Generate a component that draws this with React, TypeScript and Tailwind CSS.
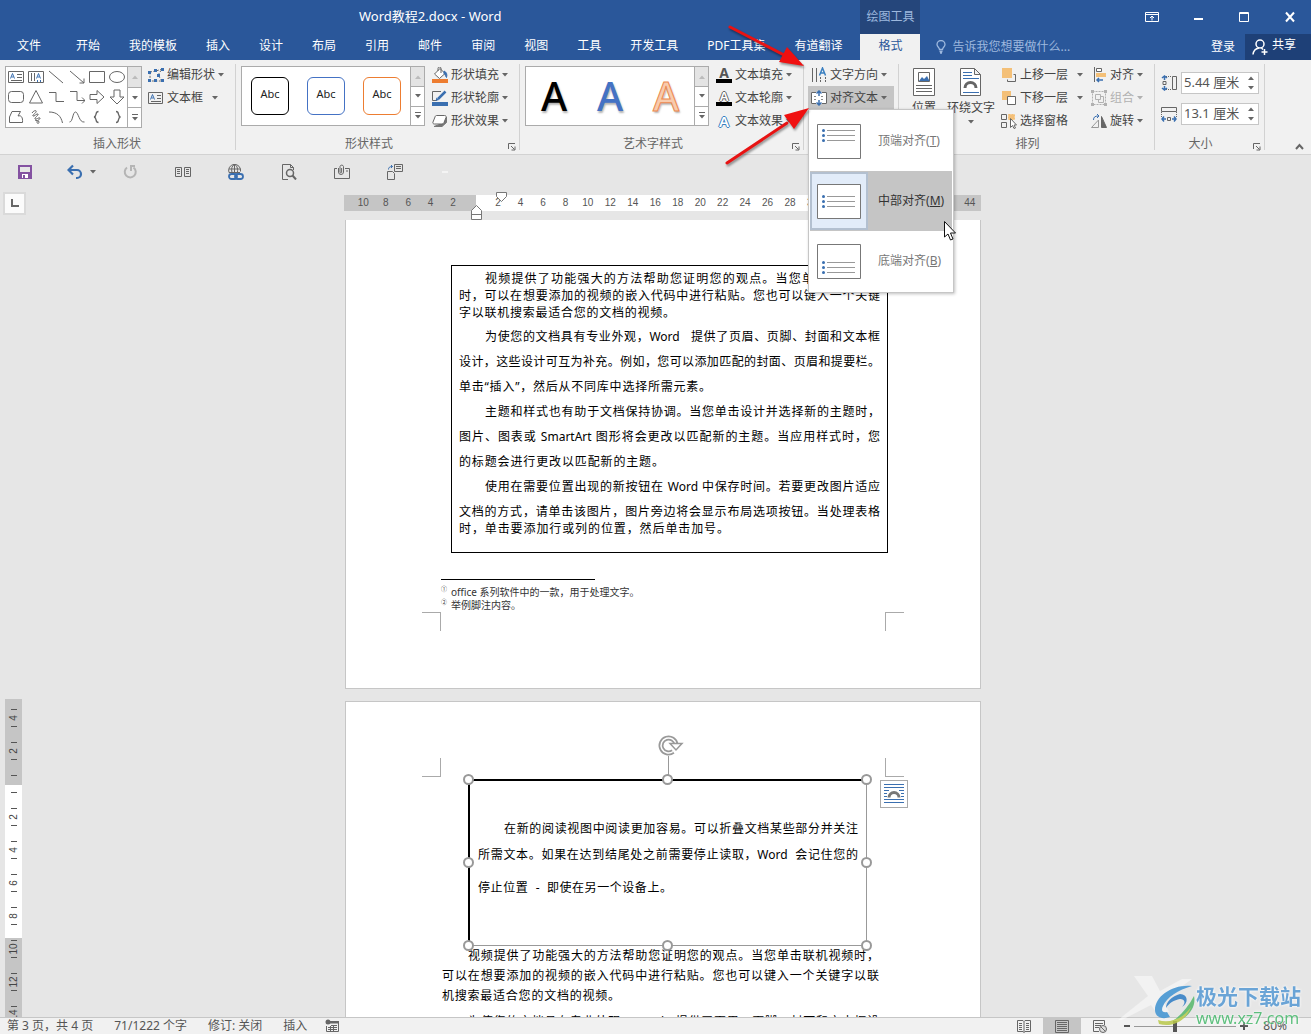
import type { ReactNode } from 'react';

type IconProps = { children: ReactNode; w?: number; h?: number; className?: string };

function Icon({ children, w = 16, h = 16, className = '' }: IconProps) {
  return (
    <svg
      width={w}
      height={h}
      viewBox={`0 0 ${w} ${h}`}
      fill="none"
      stroke="#666"
      aria-hidden="true"
      className={`shrink-0 ${className}`}
    >
      {children}
    </svg>
  );
}

function Caret({ className = 'fill-[#666]' }: { className?: string }) {
  return (
    <svg width="6" height="4" viewBox="0 0 6 4" aria-hidden="true" className={`shrink-0 ${className}`}>
      <path d="M0 0h6L3 3.5z" />
    </svg>
  );
}

const TABS = [
  '开始', '我的模板', '插入', '设计', '布局', '引用', '邮件',
  '审阅', '视图', '工具', '开发工具', 'PDF工具集', '有道翻译',
];

function Header() {
  return (
    <header className="flex h-[60px] shrink-0 bg-[#2a579a] text-white">
      <div className="flex shrink-0 flex-col">
        <h1 className="flex h-[34px] items-center justify-center text-[13px]">Word教程2.docx - Word</h1>
        <nav className="flex h-[23px] items-center gap-[29px] pr-[18px] pl-[17px]">
          <button className="mr-1.5">文件</button>
          {TABS.map((t) => (
            <button key={t}>{t}</button>
          ))}
        </nav>
      </div>
      <div className="flex w-[60px] shrink-0 flex-col">
        <div className="flex h-[34px] items-center justify-center bg-[#25467b] text-[#9db8de]">绘图工具</div>
        <button className="h-[26px] bg-[#f1f1f1] pb-[3px] text-[#2a579a]">格式</button>
      </div>
      <div className="flex min-w-0 flex-1 flex-col">
        <div className="flex h-[34px] items-center justify-end gap-8 pr-3.5">
          <button aria-label="功能区显示选项">
            <Icon w={14} h={12}>
              <path stroke="#fff" d="M.5 1.5h13v9H.5zM.5 3.5h13M7 9.5v-4M5 7l2-2 2 2" />
            </Icon>
          </button>
          <button aria-label="最小化">
            <Icon w={14} h={12}><path stroke="#fff" strokeWidth="2" d="M3 8h9" /></Icon>
          </button>
          <button aria-label="最大化">
            <Icon w={14} h={12}><path stroke="#fff" d="M2.5 1.5h9v9h-9zM2.5 2.5h9" /></Icon>
          </button>
          <button aria-label="关闭">
            <Icon w={14} h={12}><path stroke="#fff" strokeWidth="2" d="M3 1.500l8 9M11 1.500l-8 9" /></Icon>
          </button>
        </div>
        <div className="flex h-[26px] items-center pl-4">
          <button className="flex items-center gap-1.5 text-[#9db8de]">
            <Icon w={10} h={14}>
              <path stroke="#9db8de" strokeWidth="1.300" d="M3.500 9.500C3.500 7.500 1 7 1 4.500a4 4 0 0 1 8 0C9 7 6.500 7.500 6.500 9.500zM3.500 11.500h3M4 13h2" />
            </Icon>
            告诉我您想要做什么...
          </button>
          <button className="ml-auto pr-2.5">登录</button>
          <button className="flex h-[26px] w-[66px] items-center gap-1 bg-[#1e4077] pb-1 pl-[7px]">
            <Icon className="mt-1">
              <circle cx="8" cy="5" r="4" stroke="#fff" strokeWidth="1.500" />
              <path stroke="#fff" strokeWidth="1.500" d="M1 15.500c.5-4 3-6 6-6.500M9.500 9l1.500 1.500M12.500 10v6M9.500 13h6" />
            </Icon>
            共享
          </button>
        </div>
      </div>
    </header>
  );
}

type GroupProps = { className: string; label?: string; labelClass?: string; launcher?: boolean; children: ReactNode };

function Group({ className, label, labelClass = '', launcher = false, children }: GroupProps) {
  return (
    <section className={`my-1 flex shrink-0 flex-col border-r border-[#d2d2d2] ${className}`}>
      <div className="flex h-[71px] shrink-0 items-start">{children}</div>
      <div className={`flex h-[18px] shrink-0 items-center justify-center text-[#666] ${labelClass}`}>
        <span>{label}</span>
      </div>
      {launcher && (
        <button aria-label={`${label}选项`} className="-mt-2.5 mr-[3px] self-end">
          <Icon w={8} h={8}><path d="M.5 6V.5H7M3 3l3.500 3.500M7 3.500V7H3.500" /></Icon>
        </button>
      )}
    </section>
  );
}

function GalleryScroll() {
  return (
    <div className="grid w-[14px] shrink-0 grid-rows-3 border-l border-[#ababab] bg-white">
      <button aria-label="上一行" className="flex items-center justify-center bg-[#e4e4e4]">
        <Caret className="rotate-180 fill-[#bbb]" />
      </button>
      <button aria-label="下一行" className="flex items-center justify-center border-t border-[#ababab]"><Caret /></button>
      <button aria-label="其他" className="flex flex-col items-center justify-center gap-0.5 border-t border-[#ababab]">
        <span className="h-px w-1.5 bg-[#666]" />
        <Caret />
      </button>
    </div>
  );
}

type RowButtonProps = { icon: ReactNode; label: string; caret?: boolean; className?: string; caretClass?: string };

function RowButton({ icon, label, caret = true, className = '', caretClass = 'fill-[#666]' }: RowButtonProps) {
  return (
    <button className={`flex h-[23px] items-center gap-[3px] whitespace-nowrap ${className}`}>
      {icon}
      {label}
      {caret && <Caret className={caretClass} />}
    </button>
  );
}

const SHAPES: ReactNode[] = [
  <><path d="M.5 2.500h15v11H.5zM9 5.500h5M9 8.500h5M3 11.500h11" /><path stroke="#3a6fb0" d="M2.500 9.500l2-5 2 5M3.500 8h2" /></>,
  <><path d="M.5 2.500h15v11H.5zM3.500 4v8M6.500 4v8" /><path stroke="#3a6fb0" d="M8.500 9.500l2-5 2 5M9.500 8h2M9.500 11v2M12.500 11v2" /></>,
  <path d="M1 2l14 12" />,
  <path d="M1 2l14 12M15 9.500V14h-4.500" />,
  <path d="M.5 2.500h15v11H.5z" />,
  <ellipse cx="8" cy="8" rx="7.500" ry="5.500" />,
  <rect x=".5" y="2.500" width="15" height="11" rx="3" />,
  <path d="M8 1.500l6.500 12.500h-13z" />,
  <path d="M1 3.500h7v9h8" />,
  <path d="M1 2.500h7v9h8M13 8.500l3 3-3 3" />,
  <path d="M1 5.500h7v-4l7 6.500-7 6.500v-4H1z" />,
  <path d="M5 1v7H1l7 7 7-7h-4V1z" />,
  <path d="M4 2.500h8.500L10 7c3-1 5 1 4.500 6.500H1.500V8z" />,
  <path d="M4 4c2-3 5-3 4-1S4 6 5 7s4-3 5-2-4 4-3 5 4-2 5-1-3 2-3 4 2 2 2 0-3-1-4-2" />,
  <path d="M1 3c8 0 12 4 13.500 11" />,
  <path d="M.5 13C4 13 3.500 3 6.500 3S10 14 15.500 13" />,
  <path strokeWidth="1.300" d="M9.500 2.500C5.500 2.500 8.500 7.500 5 8c3.500.5.5 5.500 4.500 5.500" />,
  <path strokeWidth="1.300" d="M7 2.500c4 0 1 5 4.500 5.500C8 8.500 11 13.500 7 13.500" />,
];

function ShapeGallery() {
  return (
    <div className="mt-0.5 flex h-[62px] w-[137px] shrink-0 border border-[#ababab] bg-white">
      <div className="grid flex-1 grid-cols-6 place-items-center">
        {SHAPES.map((s, i) => (
          <button key={i} aria-label={`形状 ${i + 1}`}><Icon>{s}</Icon></button>
        ))}
      </div>
      <GalleryScroll />
    </div>
  );
}

const STYLE_SWATCHES = ['border-black', 'border-[#4472c4]', 'border-[#ed7d31]'];

const ART_STYLES = [
  'text-black',
  'text-[#4472c4]',
  'text-[#f8cbad] [-webkit-text-stroke:1px_#ed8a50]',
];

const fillIcon = (
  <Icon>
    <path fill="#fff" d="M2.500 7L8 1.500 13 6.500 7.500 11.500z" />
    <path d="M6 4V1.500a1.500 1.500 0 0 1 3 0V6" />
    <path stroke="#3a6fb0" fill="#3a6fb0" d="M12 4c2.500 1 3.500 3.500 2.500 6.500-1-1-1-3-2.500-4z" />
    <path stroke="none" fill="#ed7d31" d="M0 12h16v4H0z" />
  </Icon>
);
const outlineIcon = (
  <Icon>
    <path d="M9 1.500H.5v9H5" />
    <path stroke="#3a6fb0" strokeWidth="2.500" d="M6 9l7.500-7.500" />
    <path stroke="none" fill="#3a6fb0" d="M3.500 11l1-3.500 2.500 2.500zM0 12h16v4H0z" />
  </Icon>
);
const effectIcon = (
  <Icon>
    <path fill="#777" stroke="#777" d="M2 13.500h8l4.500-4V4l-3 6z" />
    <path fill="#fff" d="M4.500 2.500h8c1.500 0 2 1 1.500 2l-2 5c-.5 1-1 1.500-2 1.500H2.500C1 11 .5 10 1 9l2-5c.3-1 .8-1.500 1.500-1.500z" />
  </Icon>
);

type LetterIconProps = { bar?: boolean; letter: string };

function LetterIcon({ bar = false, letter }: LetterIconProps) {
  return (
    <span aria-hidden="true" className="flex h-4 w-4 shrink-0 flex-col items-center justify-end">
      <span className={`leading-3 ${letter}`}>A</span>
      {bar && <span className="h-1 w-full bg-black" />}
    </span>
  );
}

const textBoxIcon = (
  <Icon>
    <path d="M.5 2.500h14v11H.5zM9 5.500h4M9 8.500h4M3 11.500h10" />
    <path stroke="#3a6fb0" d="M2.500 9.500l2-5 2 5M3.500 8h2" />
  </Icon>
);
const editShapeIcon = (
  <Icon>
    <path strokeDasharray="2 1.500" d="M2 5l6-1 6-2-4 6 4 6H2z" />
    <path stroke="none" fill="#3a6fb0" d="M0 4h3v3H0zM6 2h3v3H6zM13 1h3v3h-3zM9 7h3v3H9zM13 12h3v3h-3zM0 12h3v3H0zM6 12h3v3H6z" />
  </Icon>
);
const textDirIcon = (
  <Icon>
    <path d="M1.500 1v14M5.500 1v14M9.500 10v2M9.500 13v2M14.500 10v2M14.500 13v2" />
    <path stroke="#3a7fc0" strokeWidth="1.500" d="M8.500 8.500L11.500 1l3 7.500M9.500 6h4" />
  </Icon>
);
const alignTextIcon = (
  <Icon>
    <path stroke="none" fill="#fff" d="M0 2h16v12H0z" />
    <path d="M5 2.500H.5v11H5M11 2.500h4.500v11H11" />
    <path stroke="#888" d="M3 6.500h3M10 6.500h3M3 9.500h3M10 9.500h3" strokeDasharray="2 1" />
    <path stroke="#3a6fb0" strokeWidth="1.500" d="M8 6V1.500M5.500 3.500L8 1l2.500 2.500M8 10v4.500M5.500 12.500L8 15l2.500-2.500" />
  </Icon>
);

const ALIGN_OPTIONS = [
  { label: '顶端对齐', key: 'T', first: 6 },
  { label: '中部对齐', key: 'M', first: 12 },
  { label: '底端对齐', key: 'B', first: 18 },
];

function AlignMenu() {
  return (
    <div role="menu" className="absolute top-full left-0 z-20 w-[146px] border border-[#c6c6c6] bg-white p-px shadow-[1px_1px_3px_rgba(0,0,0,0.25)]">
      {ALIGN_OPTIONS.map((o) => {
        const active = o.key === 'M';
        return (
          <button
            key={o.key}
            role="menuitem"
            className={`flex h-[60px] w-full items-center gap-2.5 whitespace-nowrap ${active ? 'bg-[#c5c5c5] text-[#333]' : 'text-[#777]'}`}
          >
            <span className={`flex h-[58px] w-[58px] shrink-0 items-center justify-center border-2 ${active ? 'border-[#b3c0d0] bg-[#e2ecf9]' : 'border-transparent'}`}>
              <Icon w={44} h={35}>
                <path fill="#fff" stroke="#777" d="M.5.500h43v34H.5z" />
                {[0, 5, 10].map((d) => (
                  <g key={d}>
                    <path stroke="#999" d={`M10 ${o.first + d + 0.5}h28`} />
                    <circle cx="6.500" cy={o.first + d + 0.5} r="1.500" stroke="none" fill="#3a6fb0" />
                  </g>
                ))}
              </Icon>
            </span>
            <span>{o.label}(<u>{o.key}</u>)</span>
          </button>
        );
      })}
      <svg width="12" height="20" viewBox="0 0 12 20" aria-hidden="true" className="absolute top-[111px] left-[135px]">
        <path fill="#fff" stroke="#111" d="M.5.500v15.500l3.500-3 2.500 6 2.500-1-2.500-6h5z" />
      </svg>
    </div>
  );
}

function SizeField({ label, value, icon }: { label: string; value: string; icon: ReactNode }) {
  return (
    <label className="flex items-center gap-1">
      {icon}
      <span className="flex h-[22px] w-[78px] border border-[#c6c6c6] bg-white">
        <input aria-label={label} defaultValue={value} className="w-0 flex-1 pl-0.5 text-[13px] text-[#555] outline-none" />
        <span className="flex w-[14px] flex-col items-center justify-center gap-1.5">
          <Caret className="rotate-180 fill-[#666]" />
          <Caret />
        </span>
      </span>
    </label>
  );
}

function Ribbon() {
  return (
    <div className="relative z-10 flex h-[95px] shrink-0 border-b border-[#d2d2d2] bg-[#f1f1f1]">
      <Group className="w-[236px] pl-[5px]" label="插入形状" labelClass="pr-1.5">
        <ShapeGallery />
        <div className="-mt-px ml-1.5">
          <RowButton icon={editShapeIcon} label="编辑形状" />
          <RowButton icon={textBoxIcon} label="文本框" caretClass="ml-1.5 fill-[#666]" />
        </div>
      </Group>

      <Group className="w-[284px] pl-[5px]" label="形状样式" labelClass="pr-[22px]" launcher>
        <div className="mt-0.5 flex h-[60px] w-[184px] shrink-0 border border-[#ababab] bg-white">
          <div className="flex flex-1 items-center gap-[18px] pl-[9px]">
            {STYLE_SWATCHES.map((c) => (
              <button key={c} className={`flex h-[38px] w-[38px] justify-center rounded-md border pt-[9px] text-[11px] text-[#222] ${c}`}>
                Abc
              </button>
            ))}
          </div>
          <GalleryScroll />
        </div>
        <div className="-mt-px ml-[7px]">
          <RowButton icon={fillIcon} label="形状填充" />
          <RowButton icon={outlineIcon} label="形状轮廓" />
          <RowButton icon={effectIcon} label="形状效果" />
        </div>
      </Group>

      <Group className="w-[284px] pl-[5px]" label="艺术字样式" labelClass="pr-[22px]" launcher>
        <div className="mt-0.5 flex h-[60px] w-[184px] shrink-0 border border-[#ababab] bg-white">
          <div className="grid flex-1 grid-cols-3 place-items-center">
            {ART_STYLES.map((c) => (
              <button key={c} className={`text-[40px] leading-none font-medium [text-shadow:1px_2px_2px_rgba(0,0,0,0.3)] ${c}`}>
                A
              </button>
            ))}
          </div>
          <GalleryScroll />
        </div>
        <div className="-mt-px ml-[7px]">
          <RowButton icon={<LetterIcon bar letter="text-sm font-bold text-[#555]" />} label="文本填充" />
          <RowButton icon={<LetterIcon bar letter="text-[13px] font-semibold text-white [text-shadow:1px_0_#666,-1px_0_#666,0_1px_#666,0_-1px_#666]" />} label="文本轮廓" />
          <RowButton icon={<LetterIcon letter="mb-0.5 text-[15px] font-semibold text-white [text-shadow:1px_0_#3a7fc0,-1px_0_#3a7fc0,0_1px_#3a7fc0,0_-1px_#3a7fc0]" />} label="文本效果" />
        </div>
      </Group>

      <Group className="w-[95px] pl-1">
        <div className="-mt-px">
          <RowButton icon={textDirIcon} label="文字方向" className="w-[86px] px-[3px]" />
          <div className="relative">
            <RowButton icon={alignTextIcon} label="对齐文本" className="w-[86px] bg-[#c5c5c5] px-[3px]" />
            <AlignMenu />
          </div>
        </div>
      </Group>

      <Group className="w-[256px] pl-0.5" label="排列">
        <button className="flex w-[46px] flex-col items-center gap-1 pt-1">
          <Icon w={24} h={28}>
            <path fill="#fff" d="M1.500.500h21v27h-21zM4 17.500h16M4 20.500h16M4 23.500h16M6.500 4.500h11v9h-11z" />
            <path stroke="none" fill="#3a6fb0" d="M7 13l3-4 2 2 3-3 2.500 5z" />
          </Icon>
          位置
        </button>
        <button className="flex w-[48px] flex-col items-center gap-1 pt-1 whitespace-nowrap">
          <Icon w={24} h={28}>
            <path fill="#fff" d="M1.500.500h14l6 6v21h-20zM15.500.500v6h6" />
            <path stroke="#3a6fb0" d="M4 4.500h9M4 7.500h9M4 10.500h16M4 24.500h16" />
            <path stroke="#666" strokeWidth="3" d="M6 20a5.500 5.500 0 0 1 11 0" />
          </Icon>
          环绕文字
          <Caret />
        </button>
        <div className="-mt-px ml-1.5 w-[90px]">
          <RowButton
            icon={<Icon><path stroke="none" fill="#f4c078" d="M1 1h10v10H1z" /><path d="M12.500 7.500h2v7h-8v-2" /></Icon>}
            label="上移一层"
            caretClass="ml-1.5 fill-[#666]"
          />
          <RowButton
            icon={<Icon><path stroke="none" fill="#f4c078" d="M1 1h9v9H1z" /><path fill="#fff" d="M6.500 6.500h8v8h-8z" /></Icon>}
            label="下移一层"
            caretClass="ml-1.5 fill-[#666]"
          />
          <RowButton
            icon={
              <Icon>
                <path d="M.5 1.500h5v5h-5zM.5 9.500h5v5h-5z" />
                <path fill="#f4c078" stroke="#f4c078" strokeDasharray="2 1" d="M7.500 1.500h6v5h-6z" />
                <path fill="#fff" d="M9.500 5.500v9l2-2 1.500 3 1.500-.5-1.500-3h2.500z" />
              </Icon>
            }
            label="选择窗格"
            caret={false}
          />
        </div>
        <div className="-mt-px">
          <RowButton
            icon={
              <Icon>
                <path d="M3.500 0v15" />
                <path fill="#fff" d="M5.500 1.500h5v3h-5z" />
                <path stroke="none" fill="#f4c078" d="M5 6h10v4H5z" />
                <path stroke="#3a6fb0" strokeWidth="1.500" d="M12 13H6M8 11l-2 2 2 2" />
              </Icon>
            }
            label="对齐"
          />
          <button disabled className="flex h-[23px] items-center gap-[3px] text-[#b1b1b1]">
            <Icon>
              <path stroke="#b1b1b1" strokeDasharray="2 1" d="M1.500 1.500h13v13h-13z" />
              <path stroke="#b1b1b1" d="M4.500 4.500h5v5h-5zM7.500 9.500v3h5v-6h-3" />
              <path stroke="none" fill="#b1b1b1" d="M0 0h3v3H0zM13 0h3v3h-3zM0 13h3v3H0zM13 13h3v3h-3z" />
            </Icon>
            组合
            <Caret className="fill-[#b1b1b1]" />
          </button>
          <RowButton
            icon={
              <Icon>
                <path d="M.5 14.500L7.500 7v7.500z" stroke="#999" />
                <path fill="#666" d="M10.500 3.500v11h5z" />
                <path stroke="#3a6fb0" d="M2.500 7c0-3 1.500-4 5-4M6 1l2 2-2 2" />
              </Icon>
            }
            label="旋转"
          />
        </div>
      </Group>

      <Group className="w-[110px] pl-1.5" label="大小" labelClass="pr-6" launcher>
        <div className="flex flex-col gap-[9px] pt-2">
          <SizeField
            label="高度"
            value="5.44 厘米"
            icon={
              <Icon>
                <path d="M11.500 1.500h4v13h-4z" />
                <path strokeDasharray="1 1" d="M5 1.500h6M5 14.500h6" />
                <path d="M2 6.500h3v3H2z" />
                <path stroke="#3a6fb0" strokeWidth="1.500" d="M3.500 5V1M1 3l2.500-2L6 3M3.500 11v4M1 13l2.500 2L6 13" />
              </Icon>
            }
          />
          <SizeField
            label="宽度"
            value="13.1 厘米"
            icon={
              <Icon>
                <path d="M.5 1.500h15v4H.5z" />
                <path strokeDasharray="1 1" d="M.5 6v6M15.500 6v6" />
                <path d="M6.500 11.500h3v3h-3z" />
                <path stroke="#3a6fb0" strokeWidth="1.500" d="M5 13H1M3 10.500L1 13l2 2.500M11 13h4M13 10.500l2 2.500-2 2.500" />
              </Icon>
            }
          />
        </div>
      </Group>

      <button aria-label="折叠功能区" className="mr-[7px] mb-1 ml-auto self-end">
        <Icon w={9} h={7}><path strokeWidth="2" d="M1 6l3.500-4L8 6" /></Icon>
      </button>
    </div>
  );
}

function QuickAccess() {
  return (
    <div className="flex h-[35px] shrink-0 items-center pb-0.5">
      <button aria-label="保存" className="flex w-[50px] justify-center">
        <Icon>
          <path stroke="#8452a1" strokeWidth="2" d="M2 2h12v12H2z" />
          <path fill="#8452a1" stroke="none" d="M2 8h12v6H2z" />
          <path fill="#fff" stroke="none" d="M5 10h6v4H5z" />
          <path fill="#8452a1" stroke="none" d="M6 11h2v3H6z" />
        </Icon>
      </button>
      <div className="flex w-[53px] items-center gap-[7px] pl-[17px]">
        <button aria-label="撤消">
          <Icon>
            <path stroke="#3a6fb0" strokeWidth="2.200" d="M2 6h8a4 4 0 0 1 0 8H9M6 1.500L1.500 6 6 10.500" />
          </Icon>
        </button>
        <button aria-label="撤消列表"><Caret /></button>
      </div>
      <button aria-label="重复" className="flex w-[53px] justify-center">
        <Icon><path stroke="#b5b5b5" strokeWidth="2" d="M5 3.500a5.500 5.500 0 1 0 6.500 0M8 2h5M9 2v5" /></Icon>
      </button>
      <button aria-label="阅读视图" className="flex w-[53px] justify-center">
        <Icon>
          <path d="M.5 3.500h6v9h-6zM9.500 3.500h6v9h-6zM2 5.500h3M2 7.500h3M2 9.500h3M11 5.500h3M11 7.500h3M11 9.500h3" />
        </Icon>
      </button>
      <button aria-label="超链接" className="flex w-[53px] justify-center">
        <Icon>
          <path d="M1 8.500a6 6 0 1 1 11.500-1M1 5h11.500M1 8.500h11M6.500.500v8M4 8.500c-1-4 0-7 2.500-8M9.500 8c.5-4-1-7-3-7.500" />
          <rect x="1" y="10" width="8" height="5" rx="2.500" stroke="#3a6fb0" strokeWidth="1.800" />
          <rect x="7" y="10" width="8" height="5" rx="2.500" stroke="#3a6fb0" strokeWidth="1.800" />
        </Icon>
      </button>
      <button aria-label="打印预览" className="flex w-[53px] justify-center">
        <Icon>
          <path d="M7 15.500H1.500V.500h8l3 3V6M9.500.500v3h3" />
          <circle cx="9" cy="9" r="3.500" strokeWidth="1.500" />
          <path strokeWidth="2" d="M11.500 11.500l3.500 4" />
        </Icon>
      </button>
      <button aria-label="附件" className="flex w-[53px] justify-center">
        <Icon>
          <path d="M3 4.500H.5v10h15v-10H11M12 7h2" />
          <path d="M4.500 4v4a2.500 2.500 0 0 0 5 0V2.500a1.800 1.800 0 0 0-3.500 0V8a.8.8 0 0 0 1.600 0V4" />
        </Icon>
      </button>
      <button aria-label="切换窗口" className="flex w-[53px] justify-center">
        <Icon>
          <path d="M7.500.500h8v7h-8zM9 2.500h5M9 4.500h5M.5 7.500h5l2 2v6h-7z" />
          <path stroke="#3a6fb0" d="M1.500 5.500c0-2 1-3 4-3M4 1l1.500 1.500L4 4" />
        </Icon>
      </button>
      <span className="ml-[21px] h-0.5 w-1.5 bg-[#f4f4f4]" />
    </div>
  );
}

const H_MARKS = Array.from({ length: 28 }, (_, i) => Math.abs(i - 5) * 2);
const V_MARKS = ['4', '2', '', '2', '4', '6', '8', '10', '12', '14'];

function HorizontalRuler() {
  return (
    <div className="relative mt-[5px] -ml-px h-4 bg-[linear-gradient(90deg,#c5c5c5_132px,#fff_132px,#fff_540px,#c5c5c5_540px)] pl-2">
      <div className="grid h-full grid-cols-28 items-center text-center font-['Liberation_Sans'] text-[10px] text-[#555]">
        {H_MARKS.map((m, i) => (
          <span key={i}>{m || ''}</span>
        ))}
      </div>
      <svg width="11" height="10" viewBox="0 0 11 10" aria-hidden="true" className="absolute -top-[3px] left-[152px]">
        <path fill="#fff" stroke="#777" d="M.5.500h10v4L5.500 9.500l-5-5z" />
      </svg>
      <svg width="11" height="15" viewBox="0 0 11 15" aria-hidden="true" className="absolute top-[10px] left-[127px]">
        <path fill="#fff" stroke="#777" d="M5.500.500l5 5v9H.5v-9zM.5 9.500h10" />
      </svg>
    </div>
  );
}

function VerticalRuler() {
  return (
    <div className="ml-[5px] min-h-0 w-[17px] flex-1 overflow-hidden bg-[linear-gradient(#c5c5c5_86px,#fff_86px,#fff_239px,#c5c5c5_239px)] pt-0.5 font-['Liberation_Sans'] text-[10px] text-[#444]">
      {V_MARKS.map((m, i) => (
        <div key={i} className="flex h-[33px] flex-col items-center justify-center">
          <span className="h-px w-1.5 bg-[#555]" />
          <span className="flex h-4 -rotate-90 items-center leading-none">{m}</span>
          <span className="h-px w-1.5 bg-[#555]" />
        </div>
      ))}
    </div>
  );
}

// Body lines are spread across their measure, like justified Word text
function Line({ children, className = '' }: { children: ReactNode; className?: string }) {
  return <p className={`text-justify whitespace-nowrap [text-align-last:justify] ${className}`}>{children}</p>;
}

function CropMarks({ top = false }: { top?: boolean }) {
  return (
    <div className="flex justify-between px-[76px]">
      <span className={`h-[19px] w-[19px] border-r border-[#aaa] ${top ? 'border-b' : 'border-t'}`} />
      <span className={`h-[19px] w-[19px] border-l border-[#aaa] ${top ? 'border-b' : 'border-t'}`} />
    </div>
  );
}

function FirstPage() {
  return (
    <article className="mt-[9px] h-[469px] shrink-0 border-x border-b border-[#c6c6c6] bg-white pt-[45px]">
      <div className="mr-[92px] ml-[105px] h-[288px] border border-black px-[7px] pt-1">
        <div className="leading-[17px]">
          <Line className="pl-[26px]">视频提供了功能强大的方法帮助您证明您的观点。当您单击联机视频</Line>
          <Line>时，可以在想要添加的视频的嵌入代码中进行粘贴。您也可以键入一个关键</Line>
          <Line className="w-[216px]">字以联机搜索最适合您的文档的视频。</Line>
        </div>
        <div className="mt-[3px] leading-[25px]">
          <Line className="pl-[26px]">为使您的文档具有专业外观，Word&nbsp;&nbsp; 提供了页眉、页脚、封面和文本框</Line>
          <Line>设计，这些设计可互为补充。例如，您可以添加匹配的封面、页眉和提要栏。</Line>
          <Line className="w-[252px]">单击“插入”，然后从不同库中选择所需元素。</Line>
          <Line className="pl-[26px]">主题和样式也有助于文档保持协调。当您单击设计并选择新的主题时，</Line>
          <Line>图片、图表或 SmartArt 图形将会更改以匹配新的主题。当应用样式时，您</Line>
          <Line className="w-[205px]">的标题会进行更改以匹配新的主题。</Line>
          <Line className="pl-[26px]">使用在需要位置出现的新按钮在 Word 中保存时间。若要更改图片适应</Line>
        </div>
        <div className="mt-1 leading-[17px]">
          <Line>文档的方式，请单击该图片，图片旁边将会显示布局选项按钮。当处理表格</Line>
          <Line className="w-[270px]">时，单击要添加行或列的位置，然后单击加号。</Line>
        </div>
      </div>
      <div className="mt-[26px] ml-[95px] w-[154px] border-t border-black" />
      <ol className="mt-1.5 ml-[95px] text-[10px] leading-[13px] text-[#333]">
        <li className="flex gap-1"><span className="text-[6px] leading-[7px]">①</span>office 系列软件中的一款，用于处理文字。</li>
        <li className="flex gap-1"><span className="text-[6px] leading-[7px]">②</span>举例脚注内容。</li>
      </ol>
      <CropMarks />
    </article>
  );
}

const HANDLES = [
  'left-0 top-0', 'left-1/2 top-0', 'left-full top-0',
  'left-0 top-1/2', 'left-full top-1/2',
  'left-0 top-full', 'left-1/2 top-full', 'left-full top-full',
];

function SelectedTextBox() {
  return (
    <div className="relative mr-[113px] ml-[122px] h-[167px] border-t-2 border-r border-b border-l-2 border-t-black border-r-[#999] border-b-[#999] border-l-black pt-[35px] pr-2 pl-2">
      <Line className="pl-[26px] leading-[26px]">在新的阅读视图中阅读更加容易。可以折叠文档某些部分并关注</Line>
      <Line className="leading-[26px]">所需文本。如果在达到结尾处之前需要停止读取，Word&nbsp; 会记住您的</Line>
      <Line className="mt-[7px] w-[194px] leading-[26px]">停止位置&nbsp; -&nbsp; 即使在另一个设备上。</Line>
      <div className="absolute -inset-px">
        <span className="absolute -top-[24px] left-1/2 h-[24px] w-px bg-[#999]" />
        <svg width="27" height="24" viewBox="0 0 27 24" fill="none" aria-hidden="true" className="absolute -top-[47px] left-1/2 -ml-[11px]">
          <path stroke="#999" strokeWidth="5" d="M16 18.500A7.500 7.500 0 1 1 19 11.500" />
          <path stroke="#fff" strokeWidth="1.500" d="M16 18.500A7.500 7.500 0 1 1 19 11.500" />
          <path fill="#fff" stroke="#999" strokeWidth="1.500" d="M13 10.500h12l-6 6.500z" />
        </svg>
        {HANDLES.map((pos) => (
          <span key={pos} className={`absolute -mt-1.5 -ml-1.5 h-[11px] w-[11px] rounded-full border-2 border-[#999] bg-white ${pos}`} />
        ))}
      </div>
    </div>
  );
}

function SecondPage() {
  return (
    <article className="relative mt-3 min-h-0 flex-1 overflow-hidden border border-b-0 border-[#c6c6c6] bg-white pt-14">
      <CropMarks top />
      <div className="mt-0.5">
        <SelectedTextBox />
      </div>
      <button aria-label="布局选项" className="absolute top-[78px] right-[72px] flex h-7 w-7 items-center justify-center border border-[#aaa] bg-white">
        <Icon w={20} h={20}>
          <path stroke="#3a6fb0" d="M0 .500h20M0 3.500h20M0 6.500h5M15 6.500h5M0 9.500h3M17 9.500h3M0 12.500h3M17 12.500h3M0 15.500h20M0 18.500h20" />
          <path stroke="#777" strokeWidth="3" d="M5 13.500a5 5 0 0 1 10 0" />
        </Icon>
      </button>
      <div className="mr-[101px] ml-[96px] leading-5">
        <Line className="pl-[26px]">视频提供了功能强大的方法帮助您证明您的观点。当您单击联机视频时，</Line>
        <Line>可以在想要添加的视频的嵌入代码中进行粘贴。您也可以键入一个关键字以联</Line>
        <Line className="w-[178px]">机搜索最适合您的文档的视频。</Line>
        <Line className="mt-1.5 pl-[26px]">为使您的文档具有专业外观，Word&nbsp;&nbsp; 提供了页眉、页脚、封面和文本框设</Line>
      </div>
    </article>
  );
}

function StatusBar() {
  return (
    <footer className="flex h-[17px] shrink-0 items-center overflow-hidden border-t border-[#c6c6c6] bg-[#f1f1f1] pl-[7px] text-[#555]">
      <div className="flex items-center gap-[21px]">
        <span>第 3 页，共 4 页</span>
        <span>71/1222 个字</span>
        <button>修订: 关闭</button>
        <button>插入</button>
      </div>
      <button aria-label="宏录制" className="ml-[18px]">
        <Icon w={14} h={14}>
          <path d="M5 2.500h8.500v10h-12V7M3 8.500h9M3 10.500h9M6 6.500h6M5.500 7v5M8.500 7v5" />
          <path stroke="none" fill="#666" d="M5 2h9v2.500H5z" />
          <circle cx="3" cy="3" r="2.500" stroke="none" fill="#666" />
        </Icon>
      </button>
      <button aria-label="阅读视图" className="mr-3 ml-auto">
        <Icon w={14} h={14}>
          <path d="M7 2.500v11M.5 1.500H6l1 1 1-1h5.500v11H8l-1 1-1-1H.5zM2 4.500h3M2 6.500h3M2 8.500h3M2 10.500h3M9 4.500h3M9 6.500h3M9 8.500h3M9 10.500h3" />
        </Icon>
      </button>
      <button aria-label="页面视图" className="flex h-full w-[38px] items-center justify-center bg-[#c5c5c5]">
        <Icon w={14} h={14}><path d="M.5 1.500h13v12H.5zM2 3.500h10M2 5.500h10M2 7.500h10M2 9.500h10M2 11.500h10" /></Icon>
      </button>
      <button aria-label="Web 版式视图" className="ml-3">
        <Icon w={14} h={14}>
          <path d="M6 12.500H.5v-11h11V6M2 4.500h8M2 6.500h6M2 8.500h4" />
          <circle cx="10" cy="10" r="3.500" fill="#ddd" />
          <path d="M8 8l4 4" />
        </Icon>
      </button>
      <button aria-label="缩小" className="ml-[17px] h-0.5 w-1.5 bg-[#555]" />
      <input
        type="range"
        aria-label="缩放级别"
        defaultValue={40}
        className="mx-1 h-3 w-[102px] appearance-none bg-[linear-gradient(#999,#999)] bg-[length:100%_1px] bg-center bg-no-repeat [&::-webkit-slider-thumb]:h-[11px] [&::-webkit-slider-thumb]:w-1 [&::-webkit-slider-thumb]:appearance-none [&::-webkit-slider-thumb]:bg-[#555]"
      />
      <button aria-label="放大">
        <Icon w={8} h={8}><path stroke="#555" strokeWidth="2" d="M0 4h8M4 0v8" /></Icon>
      </button>
      <button className="mr-6 ml-[15px]">80%</button>
    </footer>
  );
}

function PointerArrows() {
  return (
    <svg width="92" height="150" viewBox="0 0 92 150" fill="none" aria-hidden="true" className="pointer-events-none absolute top-5 left-[722px] z-30 drop-shadow-[1px_2px_1px_rgba(0,0,0,0.4)]">
      <path stroke="#e81313" strokeWidth="3" strokeLinecap="round" d="M8 7l56 29M5 143l60-40" />
      <path fill="#f01010" d="M82 46L57 42l8-15zM87 88l-15 21-10-14z" />
    </svg>
  );
}

function Watermark() {
  return (
    <div className="pointer-events-none absolute right-2.5 bottom-0 z-30 flex items-end opacity-85">
      <svg width="82" height="54" viewBox="0 0 82 54" fill="none" aria-hidden="true" className="-mr-1 mb-1">
        <path fill="#fff" opacity=".55" d="M16 0h18l8 15L64 3h10L45 24l6 12H38l-5-7L4 44H0l30-24z" />
        <path fill="#3f93d3" d="M74 10C55 8 37 20 37 34c0 7 7 10 15 7l-3-5c-5 1-6-2-4-6 4-9 15-16 29-20z" />
        <path fill="#2d7cc4" d="M62 18c-8 2-14 8-14 14 3-5 8-8 14-9 5 0 6 4 2 8 7-4 6-13-2-13z" />
        <path fill="#55b86a" d="M76 20c3 13-9 26-27 28 11-5 20-15 27-28z" />
        <path fill="#b9c94a" d="M40 44c12 4 26-2 33-13-5 14-19 21-32 17z" />
      </svg>
      <div className="pb-1.5 [text-shadow:0_0_3px_#fff,0_0_2px_#fff]">
        <div className="text-[21px] leading-[24px] font-bold text-[#5599d4]">极光下载站</div>
        <div className="text-base leading-5 text-[#45b86b]">www.xz7.com</div>
      </div>
    </div>
  );
}

export default function App() {
  return (
    <div className="relative flex h-screen flex-col overflow-hidden bg-[#e6e6e6] font-['Noto_Sans','Noto_Sans_CJK_SC',sans-serif] text-xs text-[#444]">
      <Header />
      <Ribbon />
      <QuickAccess />
      <main className="flex min-h-0 flex-1 justify-center pr-[13px] text-black">
        <div className="flex w-7 shrink-0 flex-col">
          <button aria-label="制表符" className="mt-0.5 mb-[484px] ml-[3px] flex h-[23px] w-[23px] shrink-0 items-center justify-center border-2 border-[#dadada] bg-[#fbfbfb]">
            <Icon w={9} h={9}><path strokeWidth="2" d="M2 0v7h7" /></Icon>
          </button>
          <VerticalRuler />
        </div>
        <div className="flex min-w-0 flex-1 justify-center">
          <div className="flex w-[636px] min-w-0 flex-col">
            <HorizontalRuler />
            <FirstPage />
            <SecondPage />
          </div>
        </div>
      </main>
      <StatusBar />
      <PointerArrows />
      <Watermark />
    </div>
  );
}
